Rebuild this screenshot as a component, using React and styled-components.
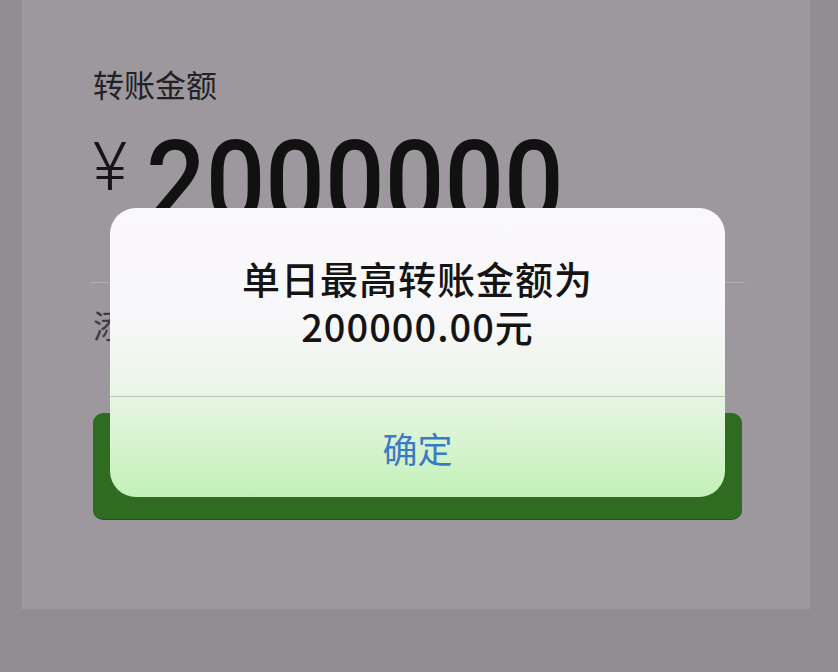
import styled, { createGlobalStyle } from "styled-components";

const Global = createGlobalStyle`
    html, body {
        margin: 0;
        padding: 0;
        background: #918d92;
        font-family: "Noto Sans CJK SC", "Noto Sans", sans-serif;
    }
`

const TransferDialog = () => {
    return (
        <Page>
            <Global />
            <Panel>
                <Label>转账金额</Label>
                <AmountRow>
                    <Yen>¥</Yen>
                    <Digits>2000000</Digits>
                </AmountRow>
                <Divider />
                <Note>添加转账说明</Note>
                <SubmitButton aria-label="转账" />

                <Alert>
                    <Message>
                        <p>单日最高转账金额为</p>
                        <p>200000.00元</p>
                    </Message>
                    <Confirm>确定</Confirm>
                </Alert>
            </Panel>
        </Page>
    )
}
export default TransferDialog;

const Page = styled.div`
    width: 838px;
    height: 672px;
    overflow: hidden;
`

const Panel = styled.div`
    position: relative;
    margin-left: 22px;
    width: 788px;
    height: 609px;
    box-sizing: border-box;
    padding: 64px 69px 0 70px;
    background: #9c989e;
    border-left: 1px solid #a29ea4;
    display: flex;
    flex-direction: column;
`

const Label = styled.div`
    font-size: 31px;
    line-height: 40px;
    color: #222124;
`

const AmountRow = styled.div`
    display: flex;
    align-items: flex-start;
    height: 105px;
    margin-top: 23px;
`

const Yen = styled.span`
    font-family: Roboto, sans-serif;
    font-weight: 300;
    font-size: 66px;
    line-height: 64px;
    margin-top: 9px;
    color: #151515;
    width: 53px;
`

const Digits = styled.span`
    display: inline-block;
    font-family: Roboto, sans-serif;
    font-weight: 500;
    font-size: 105px;
    line-height: 105px;
    color: #111;
    transform: scaleY(1.1);
    transform-origin: 0 14px;
`

const Divider = styled.div`
    height: 1px;
    margin: 50px -4px 0 -3px;
    background: #b1adb3;
`

const Note = styled.div`
    margin-top: 21px;
    font-size: 32px;
    line-height: 40px;
    color: #3d3c44;
`

const SubmitButton = styled.button`
    margin-top: 69px;
    height: 106px;
    width: 649px;
    border: none;
    border-radius: 10px;
    background: #2f6c21;
    box-shadow: 0 1px 0 #2a4f24;
`

const Alert = styled.div`
    position: absolute;
    left: 87px;
    top: 208px;
    width: 615px;
    height: 289px;
    border-radius: 26px;
    overflow: hidden;
    display: flex;
    flex-direction: column;
    background: linear-gradient(180deg,
        #faf8fc 0%,
        #f8f7f9 38%,
        #eff6ed 56%,
        #e5f5e1 68%,
        #d3f3cb 85%,
        #c3f1b8 100%);
`

const Message = styled.div`
    height: 188px;
    border-bottom: 1px solid #b9c6b6;
    display: flex;
    flex-direction: column;
    align-items: center;
    justify-content: center;

    p {
        margin: 0;
        font-size: 38px;
        line-height: 48px;
        font-weight: 500;
        letter-spacing: 1px;
        color: #141414;
    }
`

const Confirm = styled.div`
    flex: 1;
    display: flex;
    align-items: center;
    justify-content: center;
    font-size: 35px;
    color: #3b7bc6;
`
